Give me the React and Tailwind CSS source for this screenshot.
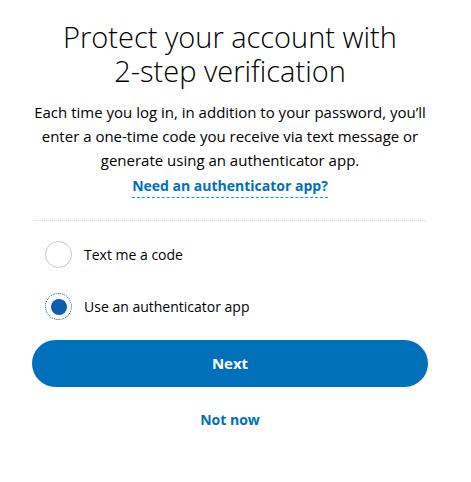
import React, { useState } from 'react';

export default function App() {
  const [choice, setChoice] = useState('app');

  const options = [
    { id: 'sms', label: 'Text me a code' },
    { id: 'app', label: 'Use an authenticator app' },
  ];

  return (
    <div className="h-[482px] w-[471px] bg-white" style={{ fontFamily: '"Open Sans", "Noto Sans", sans-serif' }}>
      <div className="w-[460px]">
        <div className="flex flex-col items-center px-8 pt-[20px]">
          <h1 className="text-center text-[29px] font-light leading-[34px] text-black">
            Protect your account with<br />2-step verification
          </h1>
          <p className="mt-[12px] max-w-[392px] text-center text-[15px] leading-[24px] text-black">
            Each time you log in, in addition to your password, you’ll enter a one-time code you receive via text message or generate using an authenticator app.
          </p>
          <a href="#" className="mt-[3px] border-b border-dashed border-[#0a9ce0] text-[14px] font-bold leading-[22px] text-[#0070ba]">
            Need an authenticator app?
          </a>
        </div>

        <div className="mx-[33px] mt-[22px] border-t border-dotted border-[#d6d6d6]" />

        <div className="mt-[20px] flex flex-col gap-[25px] px-[45px]">
          {options.map((o) => (
            <label key={o.id} className="flex cursor-pointer items-center gap-[12px]" onClick={() => setChoice(o.id)}>
              {choice === o.id ? (
                <span className="flex h-[27px] w-[27px] items-center justify-center rounded-full border border-dotted border-[#0a5ca8]">
                  <span className="h-[16px] w-[16px] rounded-full bg-[#0b60ad]" />
                </span>
              ) : (
                <span className="h-[27px] w-[27px] rounded-full border border-[#c8c8c8]" />
              )}
              <span className="text-[14px] text-black">{o.label}</span>
            </label>
          ))}
        </div>

        <div className="mt-[20px] px-[32px]">
          <button className="h-[47px] w-full rounded-full bg-[#0070ba] text-[15px] font-bold text-white">Next</button>
        </div>
        <div className="mt-[20px] text-center">
          <a href="#" className="text-[14px] font-bold text-[#0070ba]">Not now</a>
        </div>
      </div>
    </div>
  );
}
